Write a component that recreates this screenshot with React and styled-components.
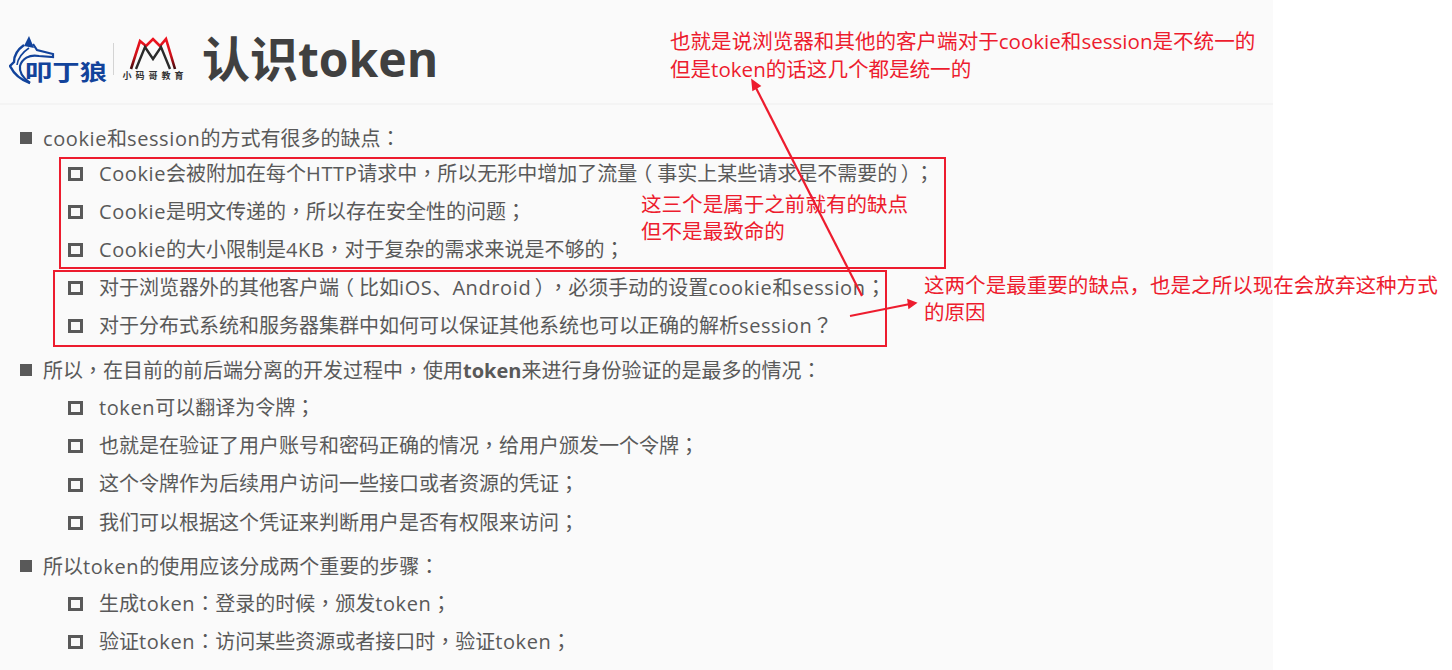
import React from 'react';
import styled, { createGlobalStyle } from 'styled-components';

const Global = createGlobalStyle`
  html, body { margin: 0; padding: 0; background: #fff; overflow: hidden; }
  * { box-sizing: border-box; }
`;
const FONT = `"Open Sans", "Noto Sans CJK SC", sans-serif`;
const RED = '#ed1c2e';

const Page = styled.div`
  position: relative;
  width: 1452px;
  height: 670px;
  overflow: hidden;
  font-family: ${FONT};
`;
const Slide = styled.main`
  width: 1273px;
  height: 670px;
  background: #fafafa;
  color: #595959;
`;
const Header = styled.header`
  display: flex;
  align-items: center;
  height: 105px;
  padding: 14px 0 0 9px;
  border-bottom: 2px solid #f4f4f4;
`;
const Logos = styled.div`
  display: flex;
  align-items: center;
  width: 193px;
  flex: none;
`;
const WolfWrap = styled.div`
  display: flex;
  margin-top: 5px;
`;
const Divider = styled.div`
  width: 1px;
  height: 32px;
  margin: 0 6px 0 4px;
  background: #d4d4d4;
`;
const BrandB = styled.div`
  display: flex;
  flex-direction: column;
  align-items: center;
  width: 66px;
`;
const BrandText = styled.span`
  font-family: "Noto Sans CJK SC", sans-serif;
  font-size: 9px;
  line-height: 10px;
  letter-spacing: 4px;
  margin-right: -4px;
  font-weight: 700;
  color: #333;
  white-space: nowrap;
`;
const Title = styled.h1`
  margin: 0;
  font-size: 48px;
  line-height: 60px;
  font-weight: 700;
  color: #404040;
  white-space: nowrap;
`;
const Content = styled.section`
  padding: 15px 0 0 20px;
`;
const Group = styled.div`
  margin-top: ${p => p.$gap || 0}px;
`;
const TopRow = styled.div`
  display: flex;
  align-items: center;
  height: 34px;
  font-size: 20px;
`;
const TopBullet = styled.span`
  width: 12px;
  height: 12px;
  margin: 2px 11px 0 0;
  background: #595959;
  flex: none;
`;
const SubList = styled.ul`
  list-style: none;
  margin: ${p => p.$top || 0}px 0 0;
  padding: 0 0 0 48px;
`;
const SubRow = styled.li`
  display: flex;
  align-items: center;
  height: ${p => p.$h || 38}px;
  font-size: 20px;
  white-space: nowrap;
`;
const SubBullet = styled.span`
  width: 15px;
  height: 14px;
  margin: 4px 16px 0 0;
  border: 3px solid #595959;
  flex: none;
`;
const Strong = styled.b`
  font-weight: 700;
`;
const Punct = styled.span`
  font-family: "Noto Sans CJK TC", sans-serif;
`;
const Paren = styled.span`
  display: inline-block;
  width: ${p => (p.$closing ? 17 : 20)}px;
  text-align: center;
  font-family: "Noto Sans CJK TC", sans-serif;
  font-feature-settings: "halt";
`;
const Latin = styled.span`
  letter-spacing: 0.6px;
`;
const RedBox = styled.div`
  position: absolute;
  left: ${p => p.$x}px;
  top: ${p => p.$y}px;
  width: ${p => p.$w}px;
  height: ${p => p.$h}px;
  border: 2px solid ${RED};
  pointer-events: none;
`;
const Note = styled.div`
  position: absolute;
  left: ${p => p.$x}px;
  top: ${p => p.$y}px;
  color: ${RED};
  font-size: 20.55px;
  line-height: 27px;
  white-space: nowrap;
  font-family: "Noto Sans CJK SC", sans-serif;
`;
const NoteLatin = styled.span`
  font-family: "Open Sans", sans-serif;
`;
const Arrows = styled.svg`
  position: absolute;
  left: 0;
  top: 0;
  pointer-events: none;
`;

const WolfLogo = () => (
  <svg width="100" height="50" viewBox="0 0 100 50" fill="none">
    <path d="M20 0 L15 10 L25 12 Z" fill="#12439b" />
    <path d="M24 8 L28 14 L44 18 L44 21 L30 20 C20 18 13 23 11 30 C10 36 14 42 21 47" stroke="#12439b" strokeWidth="2.2" />
    <path d="M15 9 C8 14 5 20 5 26 L1 30 C5 38 12 44 21 47" stroke="#12439b" strokeWidth="2.4" />
    <path d="M20 12 C14 16 9 22 8 29" stroke="#12439b" strokeWidth="1.6" />
    <text x="16" y="44" fontFamily="'Noto Sans CJK SC', sans-serif" fontWeight="700" fontSize="22" fill="#12439b" textLength="82" lengthAdjust="spacingAndGlyphs">叩丁狼</text>
  </svg>
);
const MLogo = () => (
  <svg width="48" height="35" viewBox="0 0 48 35" fill="none">
    <defs>
      <linearGradient id="mg" x1="0" y1="0" x2="0" y2="1">
        <stop offset="0" stopColor="#ee1420" />
        <stop offset="0.55" stopColor="#d01019" />
        <stop offset="1" stopColor="#3a0a0c" />
      </linearGradient>
    </defs>
    <path d="M2 33 L11 5 L17 10 L24 3 L31 10 L37 3 L46 33" stroke="url(#mg)" strokeWidth="2.6" />
    <path d="M7 33 L16 11 L24 23 L32 11 L41 33" stroke="#2b2b2b" strokeWidth="2.4" />
  </svg>
);

const rich = text =>
  text.split(/([：；，（）？]|[A-Za-z0-9]+)/).map((part, i) => {
    if (/^[（）]$/.test(part)) return <Paren key={i} $closing={part === '）'}>{part}</Paren>;
    if (/^[：；，？]$/.test(part)) return <Punct key={i}>{part}</Punct>;
    if (/^[A-Za-z0-9]+$/.test(part)) return <Latin key={i}>{part}</Latin>;
    return part;
  });

const Section = ({ gap, title, top, h, items }) => (
  <Group $gap={gap}>
    <TopRow><TopBullet /><span>{title}</span></TopRow>
    <SubList $top={top}>
      {items.map((item, i) => (
        <SubRow key={i} $h={h}><SubBullet /><span>{rich(item)}</span></SubRow>
      ))}
    </SubList>
  </Group>
);

export default function App() {
  return (
    <Page>
      <Global />
      <Slide>
        <Header>
          <Logos>
            <WolfWrap><WolfLogo /></WolfWrap>
            <Divider />
            <BrandB>
              <MLogo />
              <BrandText>小码哥教育</BrandText>
            </BrandB>
          </Logos>
          <Title>认识token</Title>
        </Header>
        <Content>
          <Section
            title={rich('cookie和session的方式有很多的缺点：')}
            top={-1}
            items={[
              'Cookie会被附加在每个HTTP请求中，所以无形中增加了流量（事实上某些请求是不需要的）；',
              'Cookie是明文传递的，所以存在安全性的问题；',
              'Cookie的大小限制是4KB，对于复杂的需求来说是不够的；',
              '对于浏览器外的其他客户端（比如iOS、Android），必须手动的设置cookie和session；',
              '对于分布式系统和服务器集群中如何可以保证其他系统也可以正确的解析session？',
            ]}
          />
          <Section
            gap={9}
            title={<>{rich('所以，在目前的前后端分离的开发过程中，使用')}<Strong>token</Strong>{rich('来进行身份验证的是最多的情况：')}</>}
            top={1}
            h={38.33}
            items={[
              'token可以翻译为令牌；',
              '也就是在验证了用户账号和密码正确的情况，给用户颁发一个令牌；',
              '这个令牌作为后续用户访问一些接口或者资源的凭证；',
              '我们可以根据这个凭证来判断用户是否有权限来访问；',
            ]}
          />
          <Section
            gap={8}
            title={rich('所以token的使用应该分成两个重要的步骤：')}
            top={1}
            items={[
              '生成token：登录的时候，颁发token；',
              '验证token：访问某些资源或者接口时，验证token；',
            ]}
          />
        </Content>
      </Slide>
      <RedBox $x={59} $y={157} $w={887} $h={112} />
      <RedBox $x={53} $y={270} $w={834} $h={77} />
      <Arrows width="1452" height="670" viewBox="0 0 1452 670" fill="none">
        <path d="M862 296 L756 88" stroke={RED} strokeWidth="2.2" />
        <path d="M752 80 L760 86 L753 90 Z" fill={RED} stroke={RED} strokeWidth="1.5" />
        <path d="M850 316 L910 304" stroke={RED} strokeWidth="2.2" />
        <path d="M916 303 L908 300 L909 308 Z" fill={RED} stroke={RED} strokeWidth="1.5" />
      </Arrows>
      <Note $x={670} $y={27}>
        也就是说浏览器和其他的客户端对于<NoteLatin>cookie</NoteLatin>和<NoteLatin>session</NoteLatin>是不统一的<br />
        但是<NoteLatin>token</NoteLatin>的话这几个都是统一的
      </Note>
      <Note $x={641} $y={190}>
        这三个是属于之前就有的缺点<br />但不是最致命的
      </Note>
      <Note $x={924} $y={271}>
        这两个是最重要的缺点，也是之所以现在会放弃这种方式<br />的原因
      </Note>
    </Page>
  );
}
